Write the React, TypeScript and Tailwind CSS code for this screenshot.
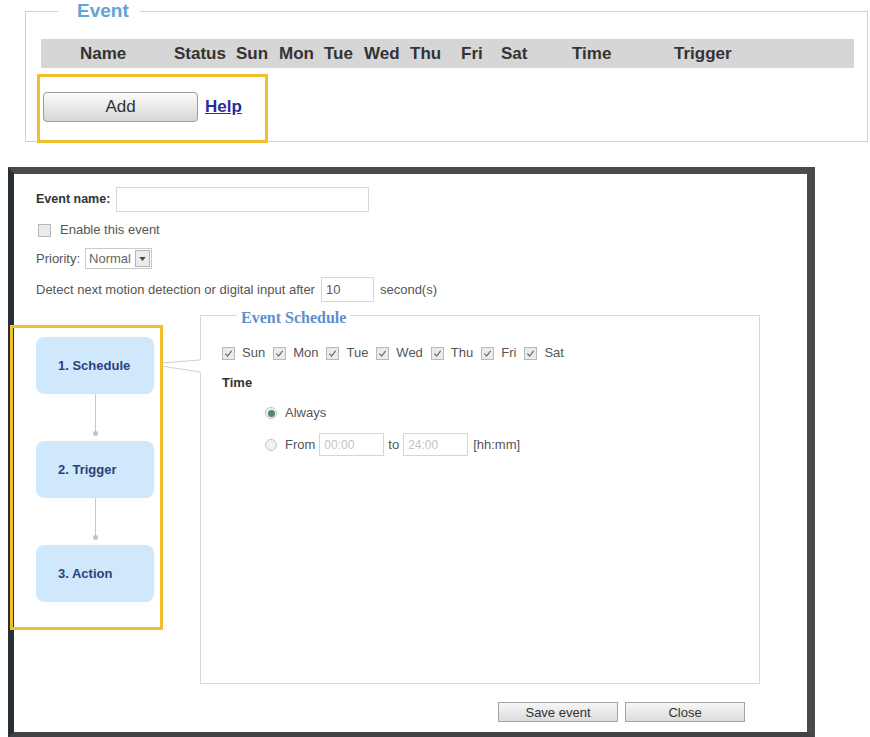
import React from 'react'

// event table header: label + column width (text is left aligned in each cell)
const headCols: [string, string][] = [
  ['Name', 'w-[94px]'],
  ['Status', 'w-[62px]'],
  ['Sun', 'w-[43px]'],
  ['Mon', 'w-[45px]'],
  ['Tue', 'w-[40px]'],
  ['Wed', 'w-[46px]'],
  ['Thu', 'w-[51px]'],
  ['Fri', 'w-[40px]'],
  ['Sat', 'w-[71px]'],
  ['Time', 'w-[102px]'],
  ['Trigger', 'w-[80px]'],
]

const days = ['Sun', 'Mon', 'Tue', 'Wed', 'Thu', 'Fri', 'Sat']

function Check({ on }: { on?: boolean }) {
  return (
    <span className="w-[13px] h-[13px] shrink-0 border border-[#b8b8b8] bg-[#ebebeb] flex items-center justify-center">
      {on && (
        <svg viewBox="0 0 10 10" className="w-[9px] h-[9px]">
          <path d="M1.5 5.2 L4 7.8 L8.5 2" fill="none" stroke="#6e6e6e" strokeWidth={1.4} />
        </svg>
      )}
    </span>
  )
}

function Radio({ on }: { on?: boolean }) {
  return (
    <span className="w-[12px] h-[12px] shrink-0 rounded-full border border-[#c4c4c4] bg-[#f1f1f1] flex items-center justify-center">
      {on && <span className="w-[7px] h-[7px] rounded-full bg-[#4f8a66]" />}
    </span>
  )
}

function Step({ label }: { label: string }) {
  return (
    <div className="w-[118px] h-[57px] rounded-[8px] bg-[#cfe8fb] flex items-center pl-[22px] text-[13px] font-bold text-[#2d3f7c]">
      {label}
    </div>
  )
}

function Link() {
  return (
    <div className="w-[118px] h-[47px] flex flex-col items-center">
      <div className="w-px flex-1 bg-[#c8c8c8]" />
      <div className="w-[5px] h-[5px] rounded-full bg-[#c2c2c2] mb-[5px]" />
    </div>
  )
}

export default function App() {
  return (
    <div className="w-[870px] h-[737px] bg-white relative overflow-hidden font-['Liberation_Sans',Arial,sans-serif]">
      <fieldset className="ml-[25px] w-[843px] border border-[#d0d0d0] pl-[15px] pr-[13px] pb-[19px]">
        <legend className="ml-[17px] pl-[19px] pr-[11px] text-[19px] leading-[22px] font-bold text-[#62a4d3]">Event</legend>
        <div className="mt-[17px] h-[29px] bg-[#d6d6d6] flex items-center pl-[39px] text-[17px] font-bold text-[#333]">
          {headCols.map(([l, w]) => (
            <span key={l} className={w}>{l}</span>
          ))}
        </div>
        <div className="mt-[24px] flex items-center">
          <button className="ml-[2px] w-[155px] h-[30px] rounded-[4px] border border-[#9c9c9c] bg-linear-to-b from-[#fbfbfb] to-[#d7d7d7] text-[17px] text-[#333]">
            Add
          </button>
          <a className="ml-[7px] text-[17px] font-bold underline text-[#2c2c9c] cursor-pointer">Help</a>
        </div>
      </fieldset>

      {/* highlight around the Add button */}
      <div className="absolute left-[37px] top-[74px] w-[231px] h-[69px] border-[3px] border-[#f0c12c]" />

      <div className="relative mt-[25px] ml-[8px] w-[807px] h-[570px] border-t-[7px] border-l-[6px] border-r-[8px] border-b-[5px] border-t-[#4b4b4b] border-l-[#2a2f34] border-r-[#4a4a4a] border-b-[#3e4448] pt-[13px] pl-[22px] text-[13px] text-[#555]">
        <div className="flex items-center h-[25px]">
          <span className="text-[12.5px] font-bold text-[#333]">Event name:</span>
          <span className="ml-[6px] w-[253px] h-[25px] border border-[#d8d8d8]" />
        </div>
        <div className="mt-[10px] h-[16px] flex items-center pl-[2px]">
          <Check />
          <span className="ml-[9px]">Enable this event</span>
        </div>
        <div className="mt-[10px] h-[21px] flex items-center">
          <span>Priority:</span>
          <span className="ml-[5px] w-[67px] h-[21px] border border-[#c9c9c9] flex items-center pl-[3px] text-[#666]">
            <span className="flex-1">Normal</span>
            <span className="w-[15px] h-[17px] mr-[1px] border border-[#b5b5b5] bg-[#ececec] flex items-center justify-center">
              <svg viewBox="0 0 8 5" className="w-[7px] h-[4px]">
                <path d="M0 0 H8 L4 5 Z" fill="#444" />
              </svg>
            </span>
          </span>
        </div>
        <div className="mt-[8px] h-[25px] flex items-center">
          <span>Detect next motion detection or digital input after</span>
          <span className="ml-[6px] w-[53px] h-[25px] border border-[#d8d8d8] flex items-center pl-[4px]">10</span>
          <span className="ml-[6px]">second(s)</span>
        </div>

        <div className="flex items-start">
          <div className="w-[164px] pt-[35px] flex flex-col">
            <Step label="1. Schedule" />
            <Link />
            <Step label="2. Trigger" />
            <Link />
            <Step label="3. Action" />
          </div>

          <div className="w-[560px]">
            <fieldset className="h-[382px] border border-[#d8d8d8] px-[21px]">
              <legend className="ml-[15px] px-[4px] pt-[6px] text-[16px] leading-[20px] font-bold text-[#5f8fca] font-['Liberation_Serif',serif]">
                Event Schedule
              </legend>
              <div className="mt-[17px] h-[16px] flex items-center gap-[7px]">
                {days.map((d) => (
                  <React.Fragment key={d}>
                    <Check on />
                    <span className="mr-[1px]">{d}</span>
                  </React.Fragment>
                ))}
              </div>
              <div className="mt-[14px] h-[16px] flex items-center font-bold text-[#333]">Time</div>
              <div className="mt-[14px] h-[16px] pl-[43px] flex items-center">
                <Radio on />
                <span className="ml-[8px]">Always</span>
              </div>
              <div className="mt-[12px] h-[23px] pl-[43px] flex items-center">
                <Radio />
                <span className="ml-[8px]">From</span>
                <span className="ml-[4px] w-[65px] h-[23px] border border-[#d6d6d6] flex items-center pl-[4px] text-[12px] text-[#c4c4c4]">00:00</span>
                <span className="ml-[4px]">to</span>
                <span className="ml-[4px] w-[65px] h-[23px] border border-[#d6d6d6] flex items-center pl-[4px] text-[12px] text-[#c4c4c4]">24:00</span>
                <span className="ml-[5px]">[hh:mm]</span>
              </div>
            </fieldset>
            <div className="mt-[18px] pr-[15px] flex justify-end gap-[7px]">
              <button className="w-[120px] h-[20px] border border-[#a4a4a4] bg-linear-to-b from-[#f7f7f7] to-[#dcdcdc] text-[13px] leading-none text-[#333]">
                Save event
              </button>
              <button className="w-[120px] h-[20px] border border-[#a4a4a4] bg-linear-to-b from-[#f7f7f7] to-[#dcdcdc] text-[13px] leading-none text-[#333]">
                Close
              </button>
            </div>
          </div>
        </div>

        {/* pointer from the active step into the schedule panel */}
        <svg className="absolute left-[141px] top-[181px]" width="47" height="22" viewBox="0 0 47 22">
          <rect x="44" y="5" width="3" height="12" fill="#fff" />
          <path d="M45 5 L6 8 M6 11 L45 17" fill="none" stroke="#cfcfcf" strokeWidth={1} />
        </svg>

        {/* highlight around the step list */}
        <div className="absolute left-[-4px] top-[151px] w-[153px] h-[305px] border-[3px] border-[#f0c12c]" />
      </div>
    </div>
  )
}
